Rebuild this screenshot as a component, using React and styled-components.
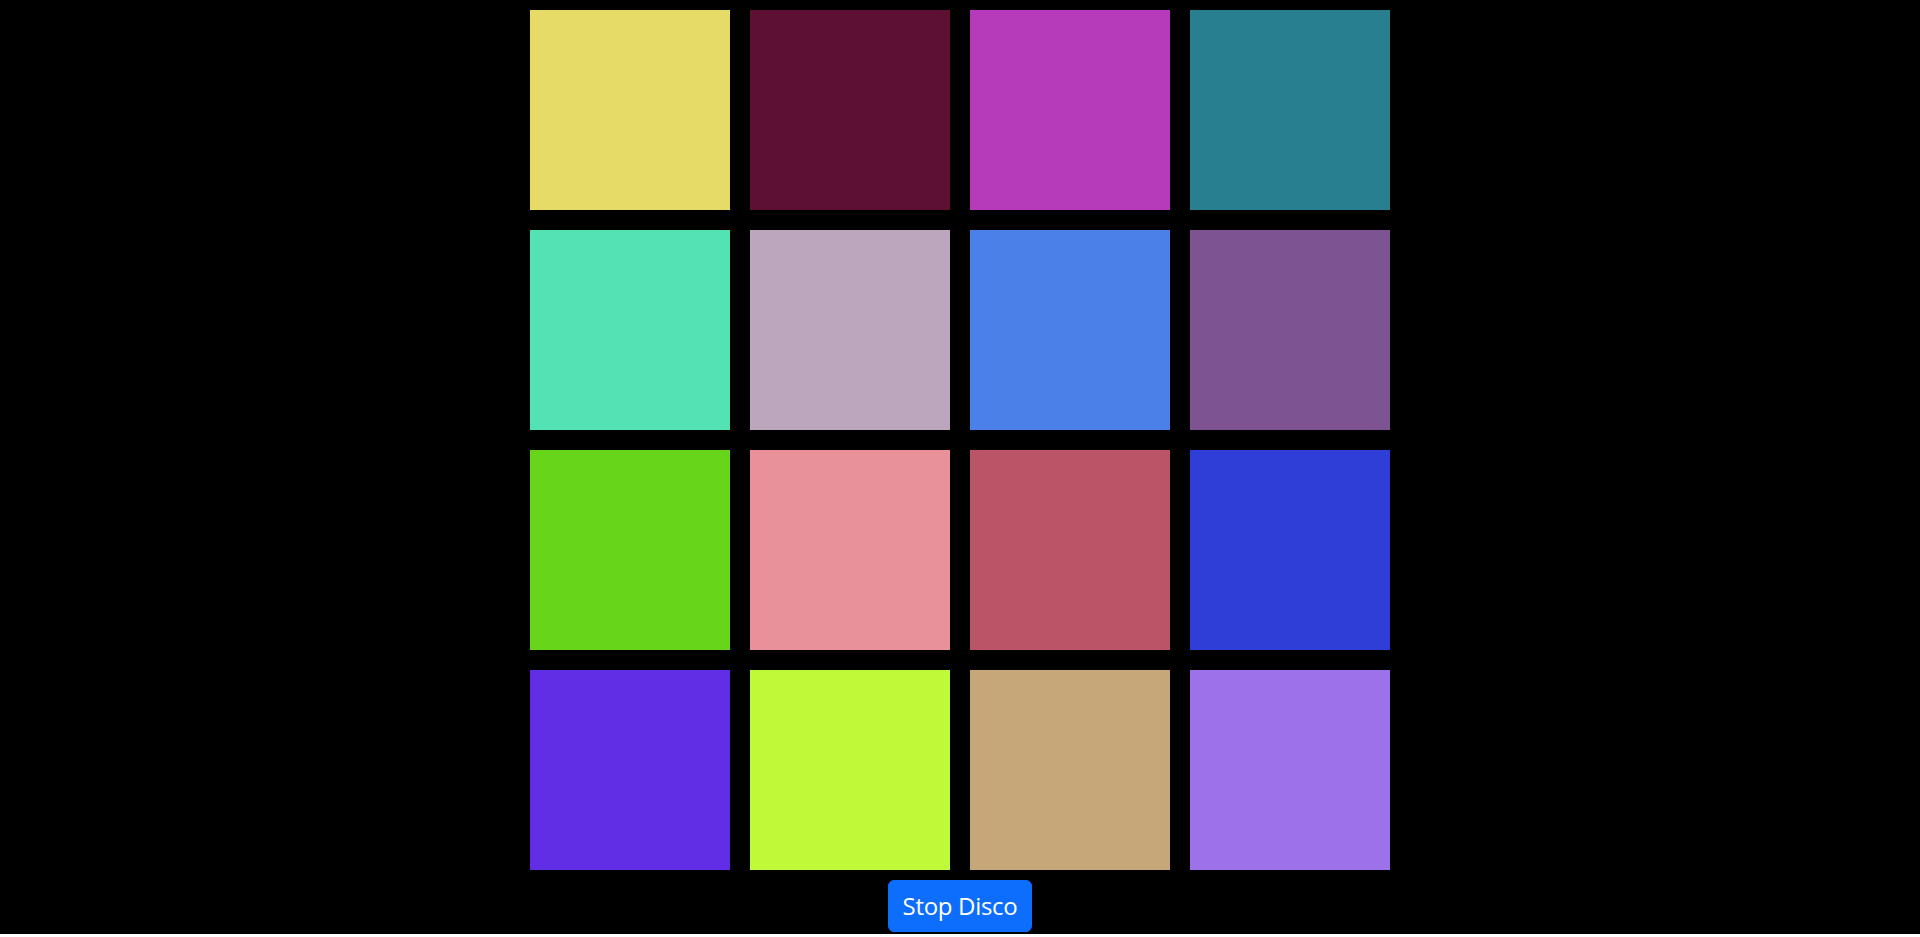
import React from "react";
import styled, { createGlobalStyle } from "styled-components";

const Global = createGlobalStyle`
  html, body { margin: 0; padding: 0; background: #ffffff; }
  body { font-family: "Open Sans", "Noto Sans", sans-serif; }
`;

const Stage = styled.div`
  background: #000000;
  display: flex;
  flex-direction: column;
  align-items: center;
  padding-bottom: 2px;
`;

const Grid = styled.div`
  width: 880px;
  display: grid;
  grid-template-columns: repeat(4, 200px);
  gap: 20px;
  padding: 10px;
  box-sizing: border-box;
`;

const Tile = styled.div`
  width: 200px;
  height: 200px;
  background: ${(p) => p.$color};
`;

const Button = styled.button`
  width: 144px;
  height: 52px;
  box-sizing: border-box;
  border: 1px solid #0d6efd;
  border-radius: 6px;
  background: #0d6efd;
  color: #ffffff;
  font-family: "Open Sans", "Noto Sans", sans-serif;
  font-size: 24px;
  line-height: 30px;
  letter-spacing: -0.3px;
  padding: 0;
  cursor: pointer;
`;

const colors = [
  "#e6db67", "#5e1033", "#b53bba", "#277f8f",
  "#53e2b3", "#bca6bd", "#4a80e8", "#7d5391",
  "#67d61a", "#e8919a", "#ba5567", "#2e3ed6",
  "#622ee5", "#befa38", "#c6a77a", "#9d71ea",
];

export default function App() {
  return (
    <>
      <Global />
      <Stage>
        <Grid>
          {colors.map((c, i) => (
            <Tile key={i} $color={c} />
          ))}
        </Grid>
        <Button>Stop Disco</Button>
      </Stage>
    </>
  );
}
